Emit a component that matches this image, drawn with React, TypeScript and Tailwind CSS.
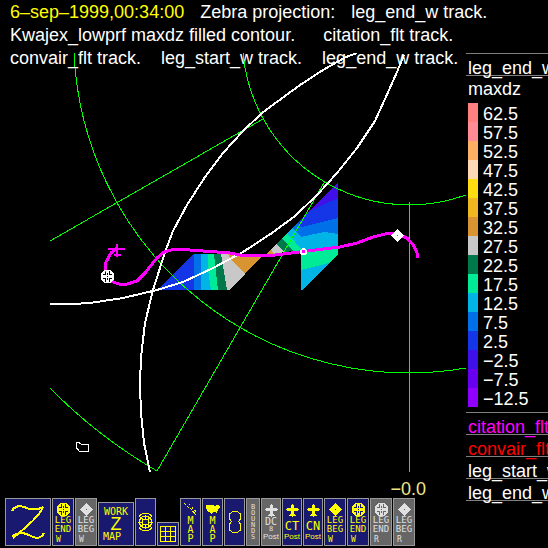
import type { ReactNode } from "react";

const levels = [
  { value: "62.5", color: "bg-[#ff8080]" },
  { value: "57.5", color: "bg-[#ff8c94]" },
  { value: "52.5", color: "bg-[#ffb062]" },
  { value: "47.5", color: "bg-[#fcd8b4]" },
  { value: "42.5", color: "bg-[#ffdc10]" },
  { value: "37.5", color: "bg-[#f0b820]" },
  { value: "32.5", color: "bg-[#d89430]" },
  { value: "27.5", color: "bg-[#c8c8c8]" },
  { value: "22.5", color: "bg-[#00784c]" },
  { value: "17.5", color: "bg-[#00eb98]" },
  { value: "12.5", color: "bg-[#00b4e6]" },
  { value: "7.5", color: "bg-[#0070e8]" },
  { value: "2.5", color: "bg-[#1436e6]" },
  { value: "−2.5", color: "bg-[#4010e8]" },
  { value: "−7.5", color: "bg-[#6800f0]" },
  { value: "−12.5", color: "bg-[#9000ff]" },
];

const tracks = [
  { name: "citation_flt", color: "text-[#ff00ff]" },
  { name: "convair_flt", color: "text-[#ff0000]" },
  { name: "leg_start_w", color: "text-white" },
  { name: "leg_end_w", color: "text-white" },
];

// filled contour cells of the maxdz field
const cells = [
  { fill: "#1436e6", points: "157,290 193,254 194,254 194,290" },
  { fill: "#0070e8", points: "194,254 201,254 201,290 194,290" },
  { fill: "#00b4e6", points: "201,254 208,254 211,290 201,290" },
  { fill: "#00eb98", points: "208,254 214,254 218,290 211,290 208,270" },
  { fill: "#00784c", points: "214,254 221,254 227,290 218,290" },
  { fill: "#c8c8c8", points: "221,254 228,254 245,274 229,290 227,290" },
  { fill: "#d89430", points: "228,254 264,254 245,274 232,261" },
  { fill: "#d89430", points: "266,254 271,249 274,254" },
  { fill: "#c8c8c8", points: "271,249 276,244 284,252 274,254" },
  { fill: "#00784c", points: "276,244 282,238 294,251 284,252" },
  { fill: "#00eb98", points: "282,238 287,233 304,250 294,252" },
  { fill: "#00b4e6", points: "287,233 292,228 301,237 310,235 324,232 338,234 338,247 303,251" },
  { fill: "#0070e8", points: "292,228 297,223 302,227 338,218 338,234 324,232 310,235 301,237" },
  { fill: "#1436e6", points: "297,223 308,212 338,198 338,218 302,227" },
  { fill: "#4010e8", points: "308,212 338,182 338,198" },
  { fill: "#00eb98", points: "301,251 338,246 338,254 329,263 301,270" },
  { fill: "#00b4e6", points: "301,270 329,263 302,290 301,290" },
];

function LegendRow({ color, children }: { color: string; children: ReactNode }) {
  return (
    <div className={`h-[22px] border-b border-[#808080] pt-[3px] pl-[2px] leading-[22px] ${color}`}>
      {children}
    </div>
  );
}

function CrossMark() {
  return (
    <path
      fillRule="evenodd"
      fill="currentColor"
      d="M3 0h7v1h1v1h1v1h1v7h-1v1h-1v1h-1v1H3v-1H2v-1H1v-1H0V3h1V2h1V1h1z
         M4 1v3H2v1h3V1z M8 1v4h3V4H9V1z M2 8v1h2v3h1V8z M8 8v4h1V9h2V8z
         M6 3v2h1V3z M6 8v2h1V8z M6 6v1h1V6z"
    />
  );
}

function PlotMap() {
  return (
    <svg viewBox="0 53 466 427" className="relative block w-full" role="img" aria-label="Radar plot" shapeRendering="crispEdges">
      {cells.map((cell) => (
        <polygon key={cell.points} points={cell.points} fill={cell.fill} />
      ))}
      <g fill="none" stroke="#00ff00" strokeWidth="1">
        <path d="M243 53A167 167 0 0 0 466 195" />
        <path d="M74 53A335 335 0 0 0 466 368" />
        <path d="M50 388A502 502 0 0 0 157 471L325 181" />
        <path d="M50 241L263 119M409.5 202V472" />
      </g>
      <g fill="none" stroke="#fff" strokeWidth="2">
        <path d="M357 53L346 57L323 70L300 85L270 107L262 113L243 131L223 153L205 177L187 205L173 231L165 252L153 290L145 323L141 357L140 385L141 413L144 443L150 472" />
        <path d="M404 55L397 72L385 99L375 121L357 148L337 173L318 194L295 216L272 233L243 252L213 268L183 282L157 290L123 298L90 303L73 304L50 304" />
        <path d="M76 447V443L78 442L81 444H88V451H79L76 447" strokeWidth="1" />
      </g>
      <path
        d="M117 248L111 253L106 262L105 270L107 277L113 282L119 284L127 284L137 281L145 273L157 258L164 252L173 249.5L190 250L230 253L240 255L267 256L287 253.5L303 251.5L323 249L340 247L357 243L373 237L387 233.5L397 234L407 238L414 246L417 253L417.5 258"
        fill="none"
        stroke="#ff00ff"
        strokeWidth="3"
      />
      <path d="M108 249h17M117 244v13M114 255h7" fill="none" stroke="#ff00ff" strokeWidth="2" />
      <circle cx="303.5" cy="251.5" r="2.5" fill="#ff00ff" stroke="#fff" strokeWidth="2" />
      <path d="M397.5 229L404 235.5L397.5 242L391 235.5Z" fill="#fff" />
      <rect x="397" y="235" width="1" height="1" fill="#ff00ff" />
      <rect x="103" y="272" width="9" height="9" fill="#000" />
      <g transform="translate(101 270)" className="text-white">
        <CrossMark />
      </g>
    </svg>
  );
}

function CrossIcon() {
  return (
    <svg width="13" height="13" viewBox="0 0 13 13" className="shrink-0" shapeRendering="crispEdges">
      <CrossMark />
    </svg>
  );
}

function DiamondIcon() {
  return (
    <svg width="13" height="13" viewBox="0 0 13 13" className="shrink-0" shapeRendering="crispEdges">
      <path
        fillRule="evenodd"
        fill="currentColor"
        d="M6 0h1v1h1v1h1v1h1v1h1v1h1v1h1v1h-1v1h-1v1h-1v1H9v1H8v1H7v1H6v-1H5v-1H4v-1H3V9H2V8H1V7H0V6h1V5h1V4h1V3h1V2h1V1h1zM6 6v1h1V6z"
      />
    </svg>
  );
}

function PlaneIcon() {
  return (
    <svg width="13" height="13" viewBox="0 0 13 13" className="shrink-0" shapeRendering="crispEdges">
      <path d="M6 0h1v1h1v3h4v1h1v1h-1v1H8v3h1v1h1v1H7v1H6v-1H3v-1h1v-1h1V7H1V6H0V5h1V4h4V1h1z" fill="currentColor" />
    </svg>
  );
}

const blue = "border-[#999999] bg-[#191970] text-[#ffff00]";
const gray = "border-[#999999] bg-[#666666] text-[#e0e0e0]";

function ToolButton({ label, tone, size, children }: { label: string; tone: string; size: string; children: ReactNode }) {
  return (
    <button type="button" aria-label={label} className={`flex shrink-0 flex-col items-center border ${tone} ${size}`}>
      {children}
    </button>
  );
}

function LegButton({ end, tone, letter }: { end: boolean; tone: string; letter: string }) {
  return (
    <ToolButton label={`LEG ${end ? "END" : "BEG"} ${letter}`} tone={tone} size="h-12 w-[22px] pt-1">
      {end ? <CrossIcon /> : <DiamondIcon />}
      <span className="text-[9px] leading-[9px]">LEG</span>
      <span className="text-[9px] leading-[9px]">{end ? "END" : "BEG"}</span>
      <span className="self-start pl-[3px] text-[8px] leading-[11px]">{letter}</span>
    </ToolButton>
  );
}

function PostButton({ name, tone }: { name: string; tone: string }) {
  return (
    <ToolButton label={`${name} Post`} tone={tone} size="h-12 w-5 pt-[5px]">
      <PlaneIcon />
      <span className="mt-[3px] text-[12px] leading-[12px]">{name}</span>
      <span className="font-['Liberation_Sans',sans-serif] text-[8px] leading-[10px]">Post</span>
    </ToolButton>
  );
}

function Stacked({ text, className }: { text: string; className: string }) {
  return (
    <span className={`flex flex-col items-center ${className}`}>
      {text.split("").map((letter, index) => (
        <span key={index}>{letter}</span>
      ))}
    </span>
  );
}

function Toolbar() {
  return (
    <nav
      aria-label="Plot tools"
      className="flex h-12 items-end gap-px pl-[5px] font-['DejaVu_Sans_Mono',monospace]"
    >
      <ToolButton label="Zebra" tone={blue} size="h-12 w-[46px]">
        <svg width="44" height="46" viewBox="0 0 44 46" fill="none" stroke="currentColor" shapeRendering="crispEdges">
          <path d="M6 12C8 8 12 6 18 8C24 11 30 12 37 8" strokeWidth="2" />
          <path d="M37 8C33 17 24 25 7 39" strokeWidth="2" />
          <path d="M6 38C12 32 18 34 23 36C29 40 35 40 38 34" strokeWidth="2" />
          <path d="M20 35L30 39" strokeWidth="2" />
        </svg>
      </ToolButton>
      <LegButton end tone={blue} letter="W" />
      <LegButton end={false} tone={gray} letter="W" />
      <ToolButton label="Work map" tone={blue} size="h-11 w-9 px-1 pt-1">
        <span className="text-[10px] leading-[10px]">WORK</span>
        <span className="font-['Liberation_Sans',sans-serif] text-[18px] leading-[15px]">Z</span>
        <span className="self-start text-[10px] leading-[10px]">MAP</span>
      </ToolButton>
      <ToolButton label="Range rings" tone={blue} size="h-12 w-[21px] justify-center">
        <svg width="17" height="20" viewBox="0 0 17 20" fill="none" stroke="currentColor" shapeRendering="crispEdges">
          <circle cx="8.5" cy="10" r="6" />
          <circle cx="8.5" cy="10" r="3" />
          <path d="M8.5 3v4M8.5 13v4M1 10.5h5M11 10.5h5M3.5 5l3 3M13.5 5l-3 3M3.5 15l3-3M13.5 15l-3-3" />
          <path d="M2 5C4 0 13 0 15 5M2 15c2 5 11 5 13 0" />
        </svg>
      </ToolButton>
      <ToolButton label="Grid" tone={blue} size="h-6 w-[22px] justify-center">
        <svg width="16" height="16" viewBox="0 0 16 16" fill="none" stroke="currentColor" shapeRendering="crispEdges">
          <path d="M.5.5h15v15H.5zM5.5 0v16M10.5 0v16M0 5.5h16M0 10.5h16" />
        </svg>
      </ToolButton>
      <ToolButton label="Track map" tone={blue} size="h-12 w-[21px] pt-1">
        <svg width="15" height="13" viewBox="0 0 15 13" fill="none" stroke="currentColor" className="shrink-0" shapeRendering="crispEdges">
          <path d="M1 0l4 4l3 2l5 6" strokeDasharray="3 1" />
          <path d="M6 1l3 3l2 3l3 2" strokeDasharray="2 2" />
        </svg>
        <Stacked text="MAP" className="text-[10px] leading-[9px]" />
      </ToolButton>
      <ToolButton label="Coast map" tone={blue} size="h-12 w-[21px] pt-[6px]">
        <svg width="14" height="9" viewBox="0 0 14 9" className="mb-[2px] shrink-0" shapeRendering="crispEdges">
          <path d="M0 0h8v1h2V0h3v1h1v2h-1v1h-1v2h-1v2h-1V7H7v1H6v1H5V8H4V7H2V6H1V4H0z" fill="currentColor" />
        </svg>
        <Stacked text="MAP" className="text-[10px] leading-[9px]" />
      </ToolButton>
      <ToolButton label="Figure eight" tone={blue} size="h-12 w-[21px] justify-center">
        <svg width="14" height="24" viewBox="0 0 14 24" fill="none" stroke="currentColor" shapeRendering="crispEdges">
          <path d="M3.5 11.5L1.5 9V4L4.5 1.5H9.5L12.5 4V9L10.5 11.5L12.5 14V20L9.5 22.5H4.5L1.5 20V14Z" />
        </svg>
      </ToolButton>
      <ToolButton label="Bounds" tone={gray} size="h-12 w-[14px] pt-[5px]">
        <Stacked text="BOUNDS" className="text-[7px] leading-[6px]" />
      </ToolButton>
      <ToolButton label="DC8 Post" tone={gray} size="h-12 w-5 pt-[5px]">
        <PlaneIcon />
        <span className="text-[10px] leading-[9px]">DC</span>
        <span className="text-[7px] leading-[6px]">8</span>
        <span className="font-['Liberation_Sans',sans-serif] text-[8px] leading-[10px]">Post</span>
      </ToolButton>
      <PostButton name="CT" tone={blue} />
      <PostButton name="CN" tone={blue} />
      <LegButton end={false} tone={blue} letter="W" />
      <LegButton end tone={blue} letter="W" />
      <LegButton end tone={gray} letter="R" />
      <LegButton end={false} tone={gray} letter="R" />
    </nav>
  );
}

export default function App() {
  return (
    <div className="min-h-screen overflow-hidden bg-black font-['Liberation_Sans',Arial,sans-serif] text-[18px] text-white">
      <header className="-mb-[17px] pt-px pl-[10px] leading-[23px] whitespace-nowrap">
        <p className="flex gap-4">
          <time className="text-[#ffff00]">6–sep–1999,00:34:00</time>
          <span>Zebra projection:</span>
          <span>leg_end_w track.</span>
        </p>
        <p className="flex gap-7">
          <span>Kwajex_lowprf maxdz filled contour.</span>
          <span>citation_flt track.</span>
        </p>
        <p className="flex gap-5">
          <span>convair_flt track.</span>
          <span>leg_start_w track.</span>
          <span>leg_end_w track.</span>
        </p>
      </header>

      <div className="flex items-start">
        <main className="min-w-0 flex-1">
          <PlotMap />
          <div className="flex justify-end pr-10 leading-[18px] text-[#f0e68c]">−0.0</div>
          <Toolbar />
        </main>

        <aside className="w-[82px] shrink-0 overflow-hidden border-t border-[#808080] whitespace-nowrap">
          <LegendRow color="text-white">leg_end_w</LegendRow>
          <h2 className="pl-[2px] leading-[27px]">maxdz</h2>
          <ul className="mb-[5px] pl-[2px]">
            {levels.map((level) => (
              <li key={level.value} className="flex h-[19px] gap-[5px] leading-[22px]">
                <span className={`w-[10px] shrink-0 ${level.color}`} />
                {level.value}
              </li>
            ))}
          </ul>
          <div className="border-t border-[#808080] pb-1">
            {tracks.map((track) => (
              <LegendRow key={track.name} color={track.color}>
                {track.name}
              </LegendRow>
            ))}
          </div>
        </aside>
      </div>
    </div>
  );
}
